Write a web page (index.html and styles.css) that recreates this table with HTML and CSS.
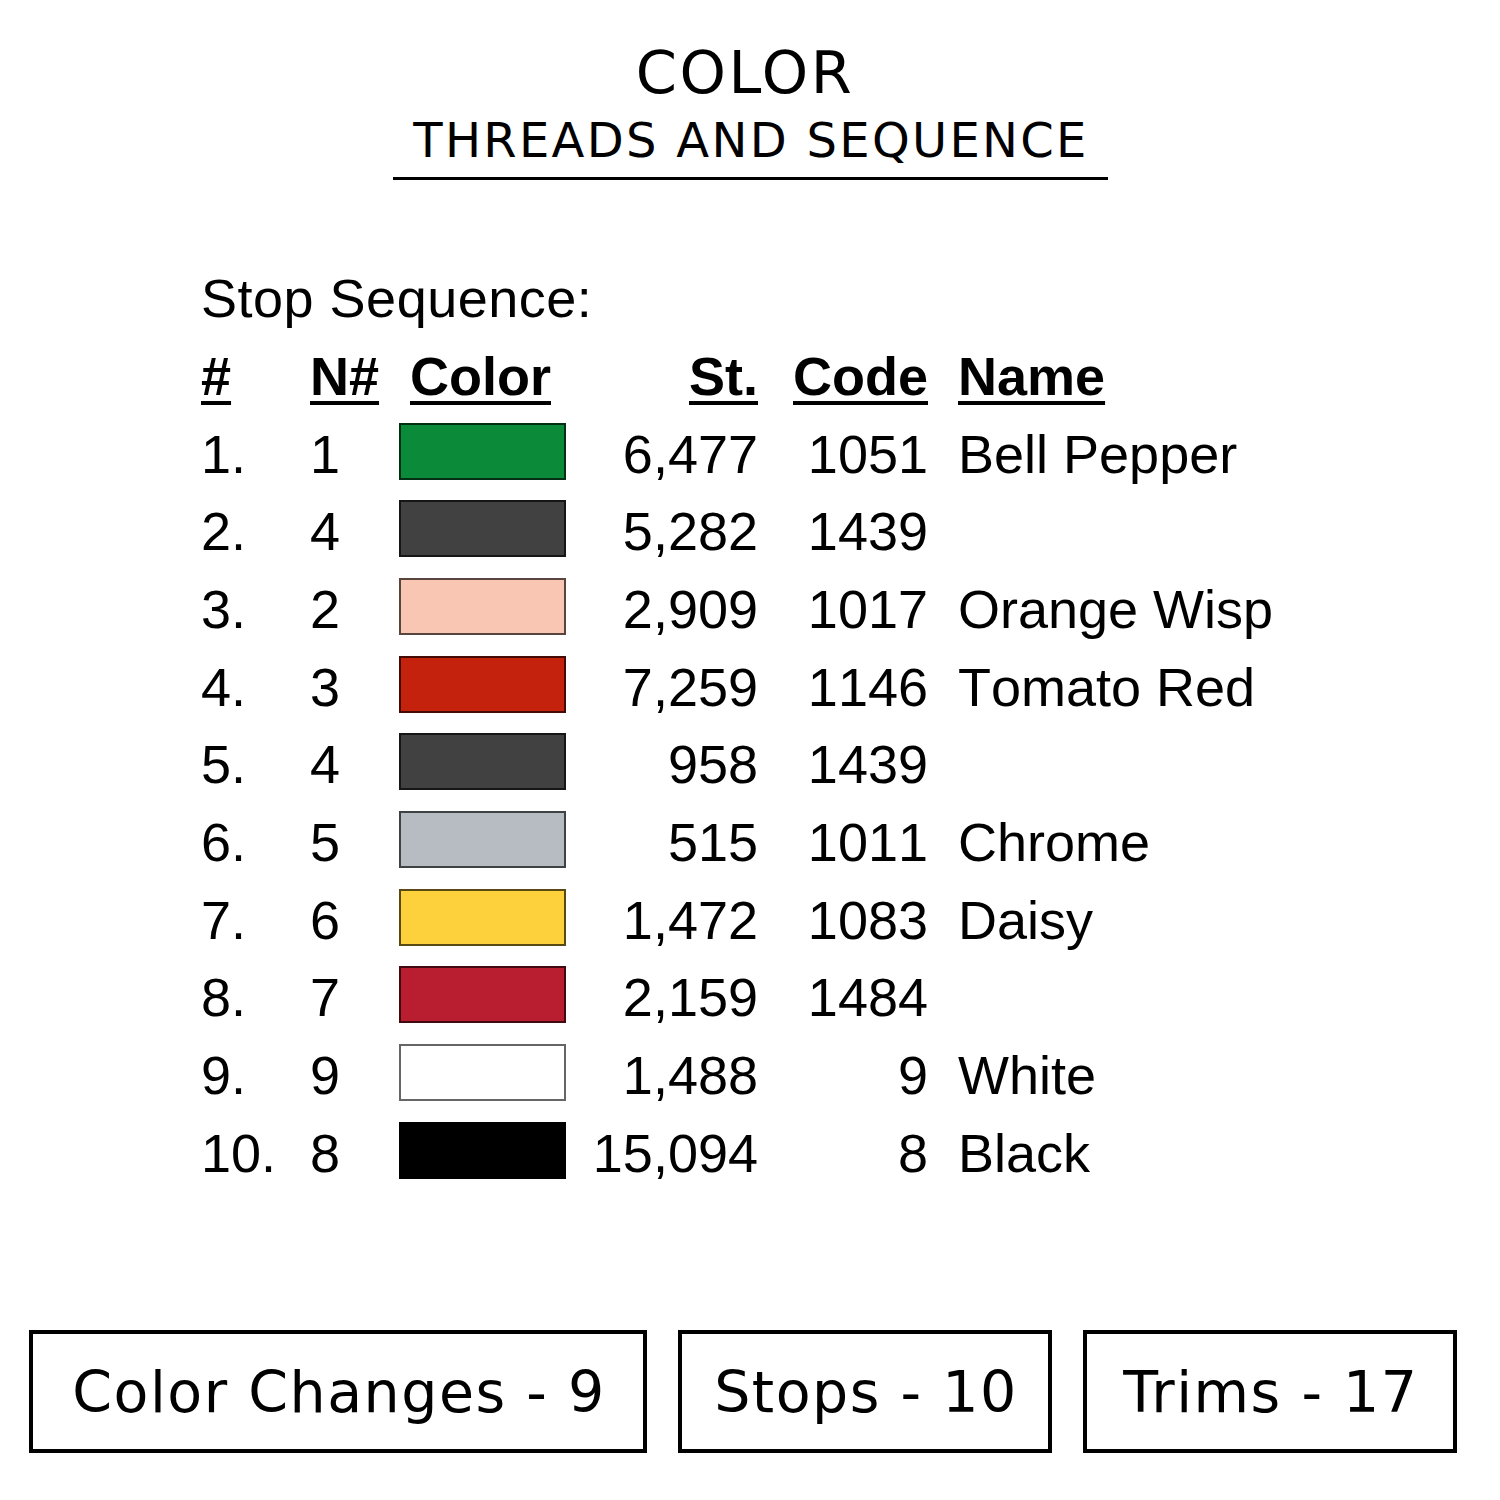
FILE: index.html
```html
<!DOCTYPE html>
<html>
<head>
<meta charset="utf-8">
<link rel="stylesheet" href="styles.css">
</head>
<body>
<div class="page">
  <header class="head">
    <div class="title">COLOR</div>
    <div class="subtitle">THREADS AND SEQUENCE</div>
    <div class="rule"></div>
  </header>

  <section class="seq">
    <div class="seq-title">Stop Sequence:</div>
    <div class="grid">
      <div class="hd c1"><u>#</u></div>
      <div class="hd c2"><u>N#</u></div>
      <div class="hd c3"><u>Color</u></div>
      <div class="hd c4"><u>St.</u></div>
      <div class="hd c5"><u>Code</u></div>
      <div class="hd c6"><u>Name</u></div>

      <div class="c1">1.</div><div class="c2">1</div><div class="c3"><span class="sw green"></span></div><div class="c4">6,477</div><div class="c5">1051</div><div class="c6">Bell Pepper</div>
      <div class="c1">2.</div><div class="c2">4</div><div class="c3"><span class="sw dgrey"></span></div><div class="c4">5,282</div><div class="c5">1439</div><div class="c6"></div>
      <div class="c1">3.</div><div class="c2">2</div><div class="c3"><span class="sw peach"></span></div><div class="c4">2,909</div><div class="c5">1017</div><div class="c6">Orange Wisp</div>
      <div class="c1">4.</div><div class="c2">3</div><div class="c3"><span class="sw red"></span></div><div class="c4">7,259</div><div class="c5">1146</div><div class="c6">Tomato Red</div>
      <div class="c1">5.</div><div class="c2">4</div><div class="c3"><span class="sw dgrey"></span></div><div class="c4">958</div><div class="c5">1439</div><div class="c6"></div>
      <div class="c1">6.</div><div class="c2">5</div><div class="c3"><span class="sw chrome"></span></div><div class="c4">515</div><div class="c5">1011</div><div class="c6">Chrome</div>
      <div class="c1">7.</div><div class="c2">6</div><div class="c3"><span class="sw daisy"></span></div><div class="c4">1,472</div><div class="c5">1083</div><div class="c6">Daisy</div>
      <div class="c1">8.</div><div class="c2">7</div><div class="c3"><span class="sw crimson"></span></div><div class="c4">2,159</div><div class="c5">1484</div><div class="c6"></div>
      <div class="c1">9.</div><div class="c2">9</div><div class="c3"><span class="sw white"></span></div><div class="c4">1,488</div><div class="c5">9</div><div class="c6">White</div>
      <div class="c1">10.</div><div class="c2">8</div><div class="c3"><span class="sw black"></span></div><div class="c4">15,094</div><div class="c5">8</div><div class="c6">Black</div>
    </div>
  </section>

  <footer class="stats">
    <div class="box b1">Color Changes - 9</div>
    <div class="box b2">Stops - 10</div>
    <div class="box b3">Trims - 17</div>
  </footer>
</div>
</body>
</html>
```

FILE: styles.css
```css
html, body {
  margin: 0;
  padding: 0;
  background: #ffffff;
}
.page {
  width: 1500px;
  height: 1500px;
  position: relative;
  color: #000;
}
.head {
  display: flex;
  flex-direction: column;
  align-items: center;
  padding-top: 43px;
  font-family: "DejaVu Sans", "Open Sans", sans-serif;
}
.title {
  font-size: 59px;
  line-height: 60px;
  letter-spacing: 2.5px;
  padding-left: 2px;
  margin-left: -12px;
}
.subtitle {
  font-size: 48px;
  line-height: 50px;
  margin-top: 12px;
  letter-spacing: 2.3px;
  padding-left: 2px;
}
.rule {
  width: 715px;
  height: 3px;
  background: #000;
  margin-top: 12px;
}
.seq {
  padding-left: 201px;
  margin-top: 88px;
  font-family: "Liberation Sans", Arial, sans-serif;
  font-size: 54px;
  font-kerning: none;
}
.seq-title {
  line-height: 60px;
  font-size: 54px;
  letter-spacing: 0.5px;
}
.grid {
  display: grid;
  grid-template-columns: 109px 89px 167px 192px 170px auto;
  grid-auto-rows: 77.7px;
  align-items: center;
  margin-top: 9px;
}
.hd {
  font-weight: bold;
}
.hd u {
  text-decoration-thickness: 4px;
  text-underline-offset: 6px;
}
.c3.hd { padding-left: 11px; }
.c4, .c5 { text-align: right; }
.c6 { padding-left: 30px; white-space: nowrap; }
.grid > div { line-height: 60px; }
.sw {
  display: block;
  width: 167px;
  height: 57px;
  margin-bottom: 5px;
  box-sizing: border-box;
  border: 2px solid rgba(0, 0, 0, 0.65);
}
.green { background: #0b8a3a; }
.dgrey { background: #414141; }
.peach { background: #f9c6b3; }
.red { background: #c4220c; }
.chrome { background: #b6bcc1; }
.daisy { background: #fdd13c; }
.crimson { background: #b81e2f; }
.white { background: #ffffff; border-color: #666; }
.black { background: #000000; }

.stats {
  position: absolute;
  left: 29px;
  top: 1330px;
  display: flex;
  gap: 31px;
  font-family: "DejaVu Sans", "Open Sans", sans-serif;
  font-size: 57px;
  letter-spacing: 1.5px;
}
.box {
  box-sizing: border-box;
  height: 123px;
  border: 4px solid #000;
  display: flex;
  align-items: center;
  justify-content: center;
  padding-left: 2px;
}
.b1 { width: 618px; }
.b2 { width: 374px; }
.b3 { width: 374px; }
```
